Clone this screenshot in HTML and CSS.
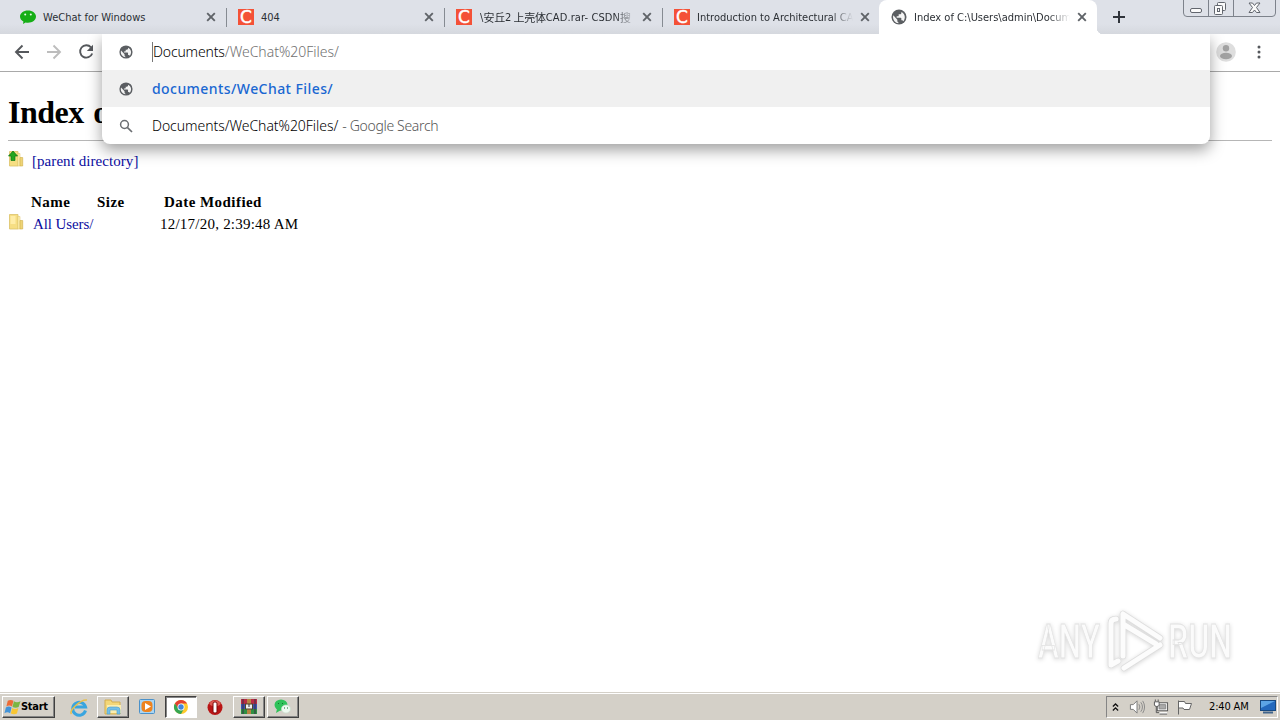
FILE: index.html
```html
<!DOCTYPE html>
<html lang="en">
<head>
<meta charset="utf-8">
<title>Index of C:\Users\admin\Documents</title>
<link rel="stylesheet" href="styles.css">
</head>
<body>
<svg class="defs" width="0" height="0">
  <symbol id="globe" viewBox="0 0 24 24"><circle cx="12" cy="12" r="11.300" fill="#5b5e62"/><path d="M3.500 9.500l6 6.500v2c0 1 .7 1.800 1.600 2v1.200A9 9 0 0 1 3 12zM18.500 18.500c-.5-1-1-1.500-2-1.500h-1v-3c0-.6-.4-1-1-1H8.500v-2h2c.6 0 1-.4 1-1V8h2c1.100 0 2-.9 2-2v-1.500c3 1.200 5.200 4.200 5.200 7.500 0 2.500-.8 4.700-2.200 6.500z" fill="#f4f4f4"/></symbol>
  <symbol id="close" viewBox="0 0 10 10"><path d="M1.200 1.200l7.600 7.600M8.800 1.200L1.200 8.800" stroke="#5f6368" stroke-width="1.900"/></symbol>
  <symbol id="folder" viewBox="0 0 16 16"><path d="M1.500 .5h8.500v14.500H1.500z" fill="#f6de83" stroke="#dcc168" stroke-width=".8"/><path d="M10 2.500h2V15h-2z" fill="#fff3b4" stroke="#e3ca77" stroke-width=".6"/><path d="M12 6.500h2.700V15H12z" fill="#eed477" stroke="#d0ae45" stroke-width=".6"/><path d="M2.500 2h5v8h-5z" fill="#ffeda7"/></symbol>
</svg>
<div class="tabstrip">
  <div class="tab">
    <svg class="fav" viewBox="0 0 16 16"><path d="M8 1.500c4.500 0 8 2.600 8 6.100s-3.500 6.200-8 6.200c-.9 0-1.700-.1-2.400-.3L3 15l.4-2.400C1.300 11.500 0 9.700 0 7.600 0 4.100 3.500 1.500 8 1.500z" fill="#16ae16"/><circle cx="5.200" cy="5.500" r="1" fill="#e9ffe9"/><circle cx="10.800" cy="5.500" r="1" fill="#e9ffe9"/></svg>
    <span class="title">WeChat for Windows</span><svg class="x"><use href="#close"/></svg>
  </div>
  <div class="tab sep"><span class="fav csdn">C</span><span class="title">404</span><svg class="x"><use href="#close"/></svg></div>
  <div class="tab sep"><span class="fav csdn">C</span><span class="title cjk fade">\<i>安</i><i>丘</i>2<i class="gap">上</i><i>壳</i><i>体</i>CAD.rar- CSDN<i>搜</i></span><svg class="x"><use href="#close"/></svg></div>
  <div class="tab sep"><span class="fav csdn">C</span><span class="title fade">Introduction to Architectural CA</span><svg class="x"><use href="#close"/></svg></div>
  <div class="tab active"><svg class="fav"><use href="#globe"/></svg><span class="title fade">Index of C:\Users\admin\Docum</span><svg class="x"><use href="#close"/></svg></div>
  <svg class="plus" viewBox="0 0 12 12"><path d="M6 0v12M0 6h12" stroke="#30343b" stroke-width="2"/></svg>
  <svg class="winbtns" viewBox="0 0 94 17"><path d="M.5 0v13q0 3.500 3.500 3.500h85q3.500 0 3.500-3.500V0M25.500 0v16M50.500 0v16" fill="none" stroke="#7d828b"/><rect x="7.500" y="8.500" width="11" height="4" rx="1.500" fill="#fafafa" stroke="#62666e"/><rect x="34.500" y="2.500" width="8" height="8" rx="1" fill="#fafafa" stroke="#62666e"/><rect x="31.500" y="5.500" width="8" height="9" rx="1" fill="#fafafa" stroke="#62666e"/><rect x="34.500" y="8.500" width="2" height="3" fill="none" stroke="#62666e"/><path d="M66 3h3.500l2 2.500 2-2.500H77l-3.500 4.500L77 12.500h-3.500l-2-2.500-2 2.500H66l3.500-5z" fill="#fafafa" stroke="#62666e"/></svg>
</div>
<div class="toolbar">
  <svg class="nav" viewBox="0 0 16 16"><path d="M15 8H2M8.500 1.500L2 8l6.500 6.500" fill="none" stroke="#55585c" stroke-width="1.900"/></svg>
  <svg class="nav" viewBox="0 0 16 16"><path d="M1 8H14M7.500 1.500L14 8l-6.500 6.500" fill="none" stroke="#bdbdbd" stroke-width="1.900"/></svg>
  <svg class="nav" viewBox="0 0 16 16"><path d="M13 3.300A6.200 6.200 0 1 0 14.200 9.500" fill="none" stroke="#55585c" stroke-width="1.900"/><path d="M15 .8v6.200H8.800z" fill="#55585c"/></svg>
  <div class="right">
    <svg class="avatar" viewBox="0 0 20 20"><circle cx="10" cy="10" r="9.800" fill="#dedede"/><circle cx="10" cy="6.200" r="3.200" fill="#a2a2a2"/><ellipse cx="10" cy="14" rx="6" ry="3.200" fill="#a2a2a2"/></svg>
    <svg class="dots" viewBox="0 0 4 14"><g fill="#55585c"><circle cx="2" cy="2" r="1.500"/><circle cx="2" cy="7" r="1.500"/><circle cx="2" cy="12" r="1.500"/></g></svg>
  </div>
  <div class="omnibox">
    <div class="row input"><svg class="ico"><use href="#globe"/></svg><span class="query"><b>Documents</b>/WeChat%20Files/</span></div>
    <div class="row selected"><svg class="ico"><use href="#globe"/></svg><span class="match">documents/WeChat Files/</span></div>
    <div class="row"><svg class="ico" viewBox="0 0 14 14"><circle cx="5.500" cy="5.500" r="3.900" fill="none" stroke="#6b6e72" stroke-width="1.500"/><path d="M8.300 8.300l4.700 4.700" stroke="#6b6e72" stroke-width="1.700"/></svg><span class="search">Documents/WeChat%20Files/</span><span class="google">- Google Search</span></div>
  </div>
</div>
<main class="page">
  <h1>Index of</h1>
  <div class="parent"><svg class="folder" viewBox="0 0 16 16"><use href="#folder"/><path d="M5 0l4.500 5H7v4.500H3V5H.5z" fill="#24a51e" stroke="#0a7710" stroke-width=".7"/></svg><a class="plink">[parent directory]</a></div>
  <div class="listing">
    <div class="line head"><span class="name">Name</span><span class="size">Size</span><span class="date">Date Modified</span></div>
    <div class="line item"><svg class="folder"><use href="#folder"/></svg><a class="name">All Users/</a><span class="date">12/17/20, 2:39:48 AM</span></div>
  </div>
</main>
<svg class="watermark" viewBox="0 0 210 72">
  <g fill="#fbfbfb" stroke="#e2e2e2" stroke-width=".8" font-family="Roboto, sans-serif" font-size="49" font-weight="500"><text x="8" y="52.500" textLength="62" lengthAdjust="spacingAndGlyphs">ANY</text><text x="138" y="52.500" textLength="64" lengthAdjust="spacingAndGlyphs">RUN</text></g>
  <g fill="none" stroke-linejoin="round" stroke-linecap="round"><path d="M86 14q-5 0-5 4v42l7-4M93 9v42M93 9l37 24M93 19l33 20M94 63l36-23" stroke="#dedede" stroke-width="6.500"/><path d="M86 14q-5 0-5 4v42l7-4M93 9v42M93 9l37 24M93 19l33 20M94 63l36-23" stroke="#fcfcfc" stroke-width="5"/></g>
</svg>
<footer class="taskbar">
  <div class="start"><svg class="flag" viewBox="0 0 18 16"><path d="M4 1.500q3-2 6 0L8.500 7.500q-3-2-6 0z" fill="#ed6b36"/><path d="M10.500 2q3 2 7 0l-2 6q-3 1.500-6.500 0z" fill="#7bb642"/><path d="M2 8.500q3-2 6 0L6.500 14.500q-3-2-6 0z" fill="#4293d8"/><path d="M8.700 9q3 2 6.500 0l-1.500 6q-3 1.500-6.500 0z" fill="#f8c633"/></svg><span>Start</span></div>
  <div class="task flat"><svg viewBox="0 0 20 20"><path d="M16.500 13.500A6.500 6.500 0 1 1 16.500 10H6" fill="none" stroke="#39a5df" stroke-width="3"/><path d="M2.500 17C-1 14 12 2 18 3" fill="none" stroke="#e8bf4b" stroke-width="1.500"/></svg></div>
  <div class="task raised"><svg viewBox="0 0 20 20"><path d="M2 3h6l1 2h8v12H2z" fill="#f3d778" stroke="#d3ad4e"/><path d="M4 8h14v8H4z" fill="#fbeeaf"/><path d="M4 17v-4q0-3 3-3h7q3 0 3 3v4h-3v-4H7v4z" fill="#73bfe8" stroke="#4c9dcc" stroke-width=".6"/></svg></div>
  <div class="task flat"><svg viewBox="0 0 20 20"><rect x="2.500" y="2.500" width="15" height="14" rx="1" fill="#a9d5f3" stroke="#4b91c9"/><rect x="4.500" y="4" width="11" height="11" rx="4" fill="#ee831e"/><path d="M8 6l6 3.500L8 13z" fill="#fff"/></svg></div>
  <div class="task pressed"><svg viewBox="0 0 20 20"><circle cx="10" cy="10" r="7" fill="#ffca2c"/><path d="M3.900 6.500A7 7 0 0 1 16.100 6.500H10L7 12z" fill="#e44131"/><path d="M3.900 6.500A7 7 0 0 0 10 17l3-5.300-3 .3-3-1z" fill="#36a652"/><circle cx="10" cy="10" r="3.500" fill="#fff"/><circle cx="10" cy="10" r="2.700" fill="#4285dc"/></svg></div>
  <div class="task flat"><svg viewBox="0 0 20 20"><circle cx="10" cy="10.500" r="7.500" fill="#b91515"/><ellipse cx="10" cy="6.500" rx="5.500" ry="3" fill="#dc5a52"/><rect x="8" y="5" width="4" height="11" rx="1.800" fill="#fff" stroke="#7b0909"/></svg></div>
  <div class="task raised"><svg viewBox="0 0 20 20"><path d="M2 2h16v5H2z" fill="#b92b45"/><path d="M2 7h16v5H2z" fill="#3c52ac"/><path d="M2 12h16v5H2z" fill="#309044"/><path d="M8 2h4v15H8z" fill="#b88442"/><path d="M4 2v15M16 2v15" stroke="#393047"/><rect x="6.500" y="7" width="7" height="5" fill="#eee" stroke="#554329"/><path d="M10 7v3" stroke="#333"/></svg></div>
  <div class="task raised"><svg viewBox="0 0 20 20"><ellipse cx="8" cy="8" rx="6.500" ry="5.500" fill="#2fc259"/><path d="M4 12l-1 4 5-3z" fill="#2fc259"/><ellipse cx="13" cy="12" rx="4.500" ry="4" fill="#eefaf0" stroke="#c9dfce" stroke-width=".7"/><path d="M5 6.500h1M9 6.500h1M11 11h1M14 11h1" stroke="#12742f"/></svg></div>
  <div class="tray">
    <svg class="chev" viewBox="0 0 8 10"><path d="M1 4.500l3-3 3 3M1 9l3-3 3 3" fill="none" stroke="#111" stroke-width="1.500"/></svg>
    <svg class="vol" viewBox="0 0 18 16"><path d="M1.500 5.500h3l4-4v13l-4-4h-3z" fill="#fff" stroke="#777"/><path d="M10.500 5q2 3 0 6M12.500 3q3.500 5 0 10M14.500 1.500q4 6.500 0 13" fill="none" stroke="#888"/></svg>
    <svg class="net" viewBox="0 0 17 16"><rect x="4.500" y="3.500" width="11" height="8.500" fill="#f5f5f5" stroke="#555"/><path d="M6.500 5.500h7v4.500h-7z" fill="#aaa" stroke="#888"/><path d="M7 14.500h8" stroke="#fff" stroke-width="2"/><path d="M7 15.500h8M3.500 7v7h3" fill="none" stroke="#555"/><path d="M1.500 2.500h5V6q0 1-2.500 1.500Q1.500 7 1.500 6zM2.500 0v2M5.500 0v2" fill="#fff" stroke="#555"/></svg>
    <svg class="flagico" viewBox="0 0 17 16"><path d="M2.500 15.500V1.500M2.500 2.500h6l1 2h6l-2 6H8l-1-1.500H2.500" fill="#fff" stroke="#666"/></svg>
    <span class="clock">2:40 AM</span>
    <svg class="desk" viewBox="0 0 16 14"><rect x=".5" y=".5" width="15" height="10" fill="#2369bd" stroke="#174981"/><path d="M1 1h14L1 8z" fill="#5ca5e6"/><path d="M3 12.500h10" stroke="#41658c" stroke-width="2"/></svg>
  </div>
</footer>
</body>
</html>
```
FILE: styles.css
```css
* { box-sizing: border-box; }
html, body { margin: 0; height: 100%; overflow: hidden; }
body { display: flex; flex-direction: column; background: #fff; font-family: "DejaVu Sans Condensed", "DejaVu Sans", sans-serif; }
svg { display: block; flex: none; }
.defs { position: absolute; }
.tabstrip { display: flex; flex: none; height: 34px; padding-left: 8px; background: linear-gradient(#dee1e8 24px, #d5d8de); font-family: "DejaVu Sans Condensed", "Noto Sans CJK SC", sans-serif; }
.tab { display: flex; align-items: center; width: 218px; flex: none; padding: 0 10px 0 12px; position: relative; }
.sep::before { content: ""; position: absolute; left: 0; top: 8px; width: 1px; height: 19px; background: #868b92; }
.fav { width: 16px; height: 16px; flex: none; }
.csdn { background: #f45137; color: #fff; font: 17px/16px "DejaVu Sans", sans-serif; text-align: center; -webkit-text-stroke: .4px #fff; }
.title { width: 158px; margin-left: 7px; padding-top: 1px; font-size: 11px; line-height: 18px; color: #2b2f34; white-space: nowrap; flex: none; }
.fade { -webkit-mask-image: linear-gradient(90deg, #000 134px, transparent 156px); mask-image: linear-gradient(90deg, #000 134px, transparent 156px); }
.cjk { margin-left: 8px; width: 157px; letter-spacing: .1px; }
.title i { display: inline-block; width: 10.800px; font: 11px/16px "Noto Sans CJK SC", sans-serif; letter-spacing: 0; vertical-align: top; }
.title .gap { margin-left: 2px; }
.x { width: 10px; height: 10px; margin-left: auto; }
.active { width: 218px; margin-left: -1px; background: #fff; border-radius: 8px 8px 0 0; }
.active::after { content: ""; position: absolute; left: 100%; bottom: 0; width: 6px; height: 6px; background: radial-gradient(circle at 100% 0, transparent 6px, #fff 6.500px); }
.plus { width: 12px; height: 12px; margin: 11px 0 0 16px; }
.winbtns { width: 94px; height: 17px; margin-left: auto; margin-right: 3px; }
.toolbar { display: flex; align-items: center; flex: none; gap: 16px; height: 38px; padding: 0 19px 2px 14px; border-bottom: 1px solid #a9a9a9; position: relative; }
.nav { width: 16px; height: 16px; }
.right { display: flex; align-items: center; gap: 21px; margin-left: auto; }
.avatar { width: 20px; height: 20px; }
.dots { width: 4px; height: 14px; }
.omnibox { position: absolute; z-index: 2; left: 102px; top: 0; width: 1108px; height: 110px; background: #fff; border-radius: 0 0 8px 8px; box-shadow: 0 6px 15px rgba(0,0,0,.38); clip-path: inset(0 -30px -40px -30px); }
.row { display: flex; align-items: center; height: 37px; padding-left: 17px; font: 14px/20px "Noto Sans", sans-serif; color: #222; white-space: nowrap; }
.input { height: 36px; }
.ico { width: 14px; height: 14px; margin-right: 19px; }
.selected { background: #f0f0f0; }
.query { color: #707070; border-left: 1px solid #777; letter-spacing: -.02px; font-weight: 300; }
.query b { font-weight: 300; color: #000; letter-spacing: -.15px; }
.match { color: #1967d2; font-weight: 500; letter-spacing: .43px; }
.search { color: #000; font-weight: 300; letter-spacing: -.05px; }
.google { color: #555; margin-left: 4px; font-weight: 300; letter-spacing: -.33px; }
.page { flex: 1; padding: 0 8px; font-family: "Liberation Serif", serif; font-size: 15px; color: #000; }
h1 { height: 69px; margin: 0 0 10px; padding-top: 21px; border-bottom: 1px solid #b6b6b6; font-size: 32px; line-height: 38px; white-space: nowrap; letter-spacing: -.5px; word-spacing: 2px; }
.parent { display: flex; height: 20px; }
.folder { width: 16px; height: 16px; }
a { color: #0b0b9e; }
.plink { margin-left: 8px; line-height: 20px; letter-spacing: .06px; }
.listing { padding-top: 20px; }
.line { display: flex; height: 22px; line-height: 22px; white-space: nowrap; }
.head { padding-left: 23px; font-weight: bold; letter-spacing: .45px; }
.head .name { width: 66px; }
.head .size { width: 67px; }
.item .folder { margin-top: 1px; }
.item .name { width: 127px; margin-left: 9px; letter-spacing: -.1px; }
.item .date { letter-spacing: .23px; }
.watermark { position: absolute; left: 1030px; top: 605px; width: 210px; height: 72px; filter: drop-shadow(0 1px 2px rgba(0,0,0,.16)); }
.taskbar { display: flex; align-items: center; flex: none; height: 28px; padding: 2px 2px 2px; background: #d4d0c8; border-top: 1px solid #d4d0c8; box-shadow: inset 0 1px #fff; }
.start { display: flex; align-items: center; width: 53px; height: 22px; padding-left: 1px; border: 1px solid; border-color: #fff #404040 #404040 #fff; box-shadow: inset -1px -1px #858585; font: bold 11px/18px "DejaVu Sans Condensed", sans-serif; margin-right: 8px; letter-spacing: -.3px; }
.flag { width: 17px; height: 16px; }
.task { display: flex; align-items: center; justify-content: center; width: 32px; height: 22px; margin-right: 2px; border: 1px solid transparent; }
.task svg { width: 20px; height: 20px; }
.raised { border-color: #fff #404040 #404040 #fff; box-shadow: inset -1px -1px #858585; }
.pressed { background: #fff; border-color: #404040 #fff #fff #404040; box-shadow: inset 1px 1px #858585; }
.tray { display: flex; align-items: center; width: 172px; height: 22px; margin-left: auto; padding-left: 5px; border: 1px solid; border-color: #858585 #fff #fff #858585; }
.chev { width: 7px; height: 10px; margin-right: 10px; }
.vol { width: 17px; height: 16px; margin-right: 7px; }
.net { width: 16px; height: 16px; margin-right: 7px; }
.flagico { width: 17px; height: 16px; margin-right: 16px; }
.clock { width: 51px; font-size: 11px; line-height: 18px; white-space: nowrap; letter-spacing: -.15px; }
.desk { width: 16px; height: 14px; }
```
